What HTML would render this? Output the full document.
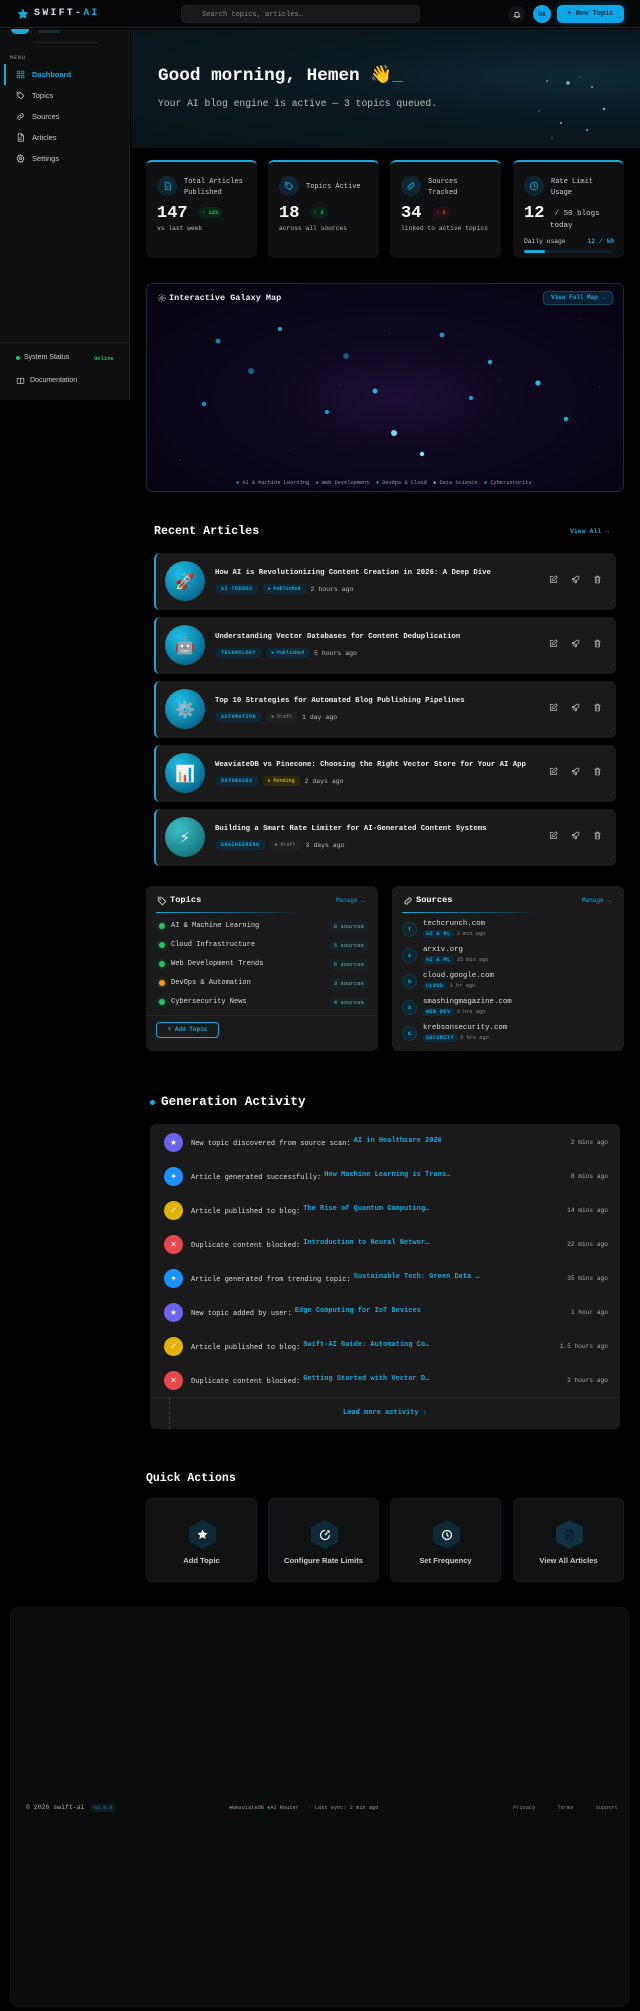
<!DOCTYPE html>
<html><head><meta charset="utf-8"><style>
*{box-sizing:border-box;margin:0;padding:0}
body{width:640px;height:2011px;background:#000;position:relative;overflow:hidden;font-family:"Liberation Mono",monospace;color:#e8e8e8}
.a{position:absolute}
.mono{font-family:"Liberation Mono",monospace}
.sans{font-family:"Liberation Sans",sans-serif}
.cy{color:#1ba8dc}
.card{background:#0e0f10;border-radius:6px;border:1px solid #16191b}
.nav{position:absolute;left:16px;font-family:"Liberation Sans",sans-serif;font-size:7.5px;color:#c8c8c8;display:flex;align-items:center;gap:7px}
.nav svg{width:9px;height:9px}
.stat{position:absolute;top:160px;width:111px;height:98px;background:#0e1011;border-radius:6px;border-top:2px solid #1ba8dc}
.stat .ic{position:absolute;left:11px;top:14px;width:20px;height:20px;border-radius:50%;background:#0f2530;display:flex;align-items:center;justify-content:center}
.stat .t{position:absolute;left:38px;top:15px;font-size:7px;line-height:10.5px;color:#cfcfcf}
.stat .n{position:absolute;left:11px;top:42px;font-size:17px;font-weight:bold;color:#fff}
.stat .s{position:absolute;left:11px;top:63px;font-size:6.3px;color:#bbb}
.pill{display:inline-block;font-size:5.5px;padding:2px 4px;border-radius:6px}
.art{position:absolute;left:154px;width:462px;height:57px;background:#1a1a1b;border-radius:6px;border-left:2px solid #1ba8dc}
.art .th{position:absolute;left:9px;top:8px;width:40px;height:40px;border-radius:50%;background:radial-gradient(circle at 35% 30%,#1ec0e6,#0a6f95 70%,#08506d);display:flex;align-items:center;justify-content:center;font-size:16px;font-family:"DejaVu Sans",sans-serif}
.art .tt{position:absolute;left:59px;top:16px;font-size:7.3px;font-weight:bold;color:#f0f0f0;white-space:nowrap}
.art .tg{position:absolute;left:60px;top:31px;display:flex;gap:5px;align-items:center;font-size:6.5px;color:#bbb}
.tag{font-size:5px;font-weight:bold;padding:2px 5px;border-radius:3px;background:#0f2a36;color:#1ba8dc;letter-spacing:.5px}
.art .ac{position:absolute;right:14px;top:22px;display:flex;gap:13px}
.art .ac svg{width:9px;height:9px}
.trow{position:absolute;left:13px;right:10px;height:14px;display:flex;align-items:center;font-size:7px;color:#ddd}
.trow .d{width:6px;height:6px;border-radius:50%;background:#22c55e;margin-right:6px;box-shadow:0 0 4px #22c55e88}
.trow .b{margin-left:auto;font-size:5.6px;background:#152224;padding:2px 4px;border-radius:3px;color:#8aa}
.srow{position:absolute;left:10px;height:22px}
.srow .av{position:absolute;left:0;top:2px;width:15px;height:15px;border-radius:50%;background:#0f2530;border:1px solid #173845;color:#1ba8dc;font-size:5.5px;font-weight:bold;display:flex;align-items:center;justify-content:center}
.srow .nm{position:absolute;left:21px;top:0;font-size:7.4px;color:#ddd;white-space:nowrap}
.srow .mt{position:absolute;left:21px;top:11px;font-size:5.3px;color:#888;white-space:nowrap}
.arow{position:absolute;left:14px;right:12px;height:20px}
.arow .i{position:absolute;left:0;top:0;width:19px;height:19px;border-radius:50%;display:flex;align-items:center;justify-content:center;color:#fff;font-size:8px;font-family:"DejaVu Sans",sans-serif}
.arow .x{position:absolute;left:27px;top:7px;font-size:7px;color:#ddd;white-space:nowrap}
.arow .x b{color:#1ba8dc;position:relative;top:-3px;margin-left:3px}
.arow .tm{position:absolute;right:0;top:6px;font-size:6.2px;color:#aaa}
.qa{position:absolute;top:1498px;width:111px;height:84px;background:#0f1112;border-radius:6px;border:1px solid #171a1c}
.qa .hx{position:absolute;left:42px;top:21px;width:27px;height:29px;background:#0d2a36;clip-path:polygon(50% 0,100% 25%,100% 75%,50% 100%,0 75%,0 25%);display:flex;align-items:center;justify-content:center}
.qa .l{position:absolute;left:0;right:0;top:57px;text-align:center;font-family:"Liberation Sans",sans-serif;font-weight:bold;font-size:7.6px;color:#ccc}
</style></head><body>

<!-- sidebar -->
<div class="a" style="left:0;top:29px;width:130px;height:371px;background:#0e1010;border-right:1px solid #1a1e20"></div>
<div class="a" style="left:11px;top:29px;width:18px;height:5px;border-radius:0 0 9px 9px;background:#1ba8dc"></div>
<div class="a" style="left:38px;top:30px;width:22px;height:3px;background:#1a2a30"></div>
<div class="a" style="left:33px;top:42px;width:65px;height:1px;background:#1c2224"></div>
<div class="a" style="left:10px;top:55px;font-size:5px;color:#999;letter-spacing:1px">MENU</div>
<div class="a" style="left:4px;top:64px;width:2px;height:21px;background:#1ba8dc"></div>
<div class="nav" style="top:70px;color:#1ba8dc;font-weight:bold"><svg viewBox="0 0 24 24" fill="none" stroke="#1ba8dc" stroke-width="2"><rect x="3" y="3" width="7" height="7" rx="1"/><rect x="14" y="3" width="7" height="7" rx="1"/><rect x="3" y="14" width="7" height="7" rx="1"/><rect x="14" y="14" width="7" height="7" rx="1"/></svg>Dashboard</div>
<div class="nav" style="top:91px"><svg viewBox="0 0 24 24" fill="none" stroke="#ccc" stroke-width="2"><path d="M3 3h8l10 10-8 8L3 11z"/><circle cx="7.5" cy="7.5" r="1"/></svg>Topics</div>
<div class="nav" style="top:112px"><svg viewBox="0 0 24 24" fill="none" stroke="#ccc" stroke-width="2"><path d="M10 14a4 4 0 005.6 0l3-3a4 4 0 00-5.6-5.6l-1 1M14 10a4 4 0 00-5.6 0l-3 3a4 4 0 005.6 5.6l1-1"/></svg>Sources</div>
<div class="nav" style="top:133px"><svg viewBox="0 0 24 24" fill="none" stroke="#ccc" stroke-width="2"><path d="M6 2h9l5 5v15H6zM14 2v6h6M9 13h6M9 17h6"/></svg>Articles</div>
<div class="nav" style="top:154px"><svg viewBox="0 0 24 24" fill="none" stroke="#ccc" stroke-width="2"><circle cx="12" cy="12" r="3"/><path d="M12 2l2 3 3.5-1 .5 3.5 3 2-2 3 2 3-3 2-.5 3.5-3.5-1-2 3-2-3-3.5 1L6 17l-3-2 2-3-2-3 3-2 .5-3.5L10 5z"/></svg>Settings</div>
<div class="a" style="left:0;top:342px;width:130px;height:1px;background:#1a2224"></div>
<div class="a" style="left:16px;top:356px;width:4px;height:4px;border-radius:50%;background:#22c55e"></div>
<div class="a sans" style="left:24px;top:354px;font-size:7px;color:#ccc">System Status</div>
<div class="a" style="left:94px;top:355px;font-size:5.5px;color:#22c55e;font-weight:bold">Online</div>
<svg class="a" style="left:16px;top:377px" width="9" height="8" viewBox="0 0 24 24" fill="none" stroke="#ccc" stroke-width="2"><path d="M2 4h7a3 3 0 013 3v14a2 2 0 00-2-2H2zM22 4h-7a3 3 0 00-3 3v14a2 2 0 012-2h8z"/></svg>
<div class="a sans" style="left:30px;top:377px;font-size:7px;color:#ccc">Documentation</div>

<!-- header -->
<div class="a" style="left:0;top:0;width:640px;height:28px;background:#050607;border-bottom:1px solid #0f2e3a"></div>
<svg class="a" style="left:17px;top:8px" width="12" height="12" viewBox="0 0 24 24"><path d="M12 1l3.3 7 7.7.9-5.7 5.3 1.5 7.6L12 18l-6.8 3.8 1.5-7.6L1 8.9 8.7 8z" fill="#1ba8dc"/></svg>
<div class="a" style="left:34px;top:8px;font-size:10px;font-weight:bold;letter-spacing:2.2px;color:#dde"><span>SWIFT-</span><span class="cy">AI</span></div>
<div class="a" style="left:181px;top:5px;width:239px;height:18px;background:#17191a;border-radius:5px;border:1px solid #222;font-size:7px;color:#888;padding:5px 0 0 20px">Search topics, articles…</div>
<div class="a" style="left:508px;top:6px;width:17px;height:17px;border-radius:50%;background:#0e1517;display:flex;align-items:center;justify-content:center"><svg width="8" height="9" viewBox="0 0 24 24" fill="none" stroke="#ddd" stroke-width="2.5"><path d="M6 17V11a6 6 0 0112 0v6l2 2H4zM10 21h4"/></svg></div>
<div class="a" style="left:533px;top:5px;width:18px;height:18px;border-radius:50%;background:#0ea5e9;font-size:6px;font-weight:bold;display:flex;align-items:center;justify-content:center;color:#053447">HA</div>
<div class="a" style="left:557px;top:5px;width:67px;height:18px;border-radius:5px;background:#0ea5e9;box-shadow:0 0 8px #0ea5e966;font-size:7px;font-weight:bold;color:#032d3f;display:flex;align-items:center;justify-content:center">+ New Topic</div>

<!-- hero -->
<div class="a" style="left:131px;top:29px;width:509px;height:119px;background:radial-gradient(ellipse at 90% 40%,#0d2a35 0%,#0a1a20 40%,#091317 100%)"></div>
<div class="a" style="left:158px;top:65px;font-size:17.7px;font-weight:bold;color:#fff;white-space:nowrap">Good morning, Hemen <span style="font-family:'DejaVu Sans',sans-serif;color:#f5b82e">👋</span><span class="cy">_</span></div>
<div class="a" style="left:158px;top:98px;font-size:9.7px;color:#b8bcbe;white-space:nowrap">Your AI blog engine is active — 3 topics queued.</div>
<svg class="a" style="left:530px;top:70px" width="80" height="80"><g fill="#3f8fa8"><circle cx="17" cy="11" r="1"/><circle cx="38" cy="13" r="1.8" fill="#8ab"/><circle cx="62" cy="17" r="1.2"/><circle cx="74" cy="39" r="1.2" fill="#9ab"/><circle cx="9" cy="41" r=".8"/><circle cx="31" cy="53" r="1" fill="#9ab"/><circle cx="57" cy="60" r="1.2"/><circle cx="22" cy="68" r=".7"/><circle cx="50" cy="7" r=".6"/></g></svg>

<!-- stats -->
<div class="stat" style="left:146px"><div class="ic"><svg width="9" height="10" viewBox="0 0 24 24" fill="none" stroke="#1ba8dc" stroke-width="2"><path d="M6 2h9l5 5v15H6zM9 14l2 2 4-4"/></svg></div><div class="t">Total Articles<br>Published</div><div class="n">147 <span class="pill" style="background:#0c2418;color:#22c55e;vertical-align:middle">↑ 12%</span></div><div class="s">vs last week</div></div>
<div class="stat" style="left:268px"><div class="ic"><svg width="10" height="10" viewBox="0 0 24 24" fill="none" stroke="#1ba8dc" stroke-width="2"><path d="M3 3h8l10 10-8 8L3 11z"/><circle cx="7.5" cy="7.5" r="1"/></svg></div><div class="t" style="top:20px">Topics Active</div><div class="n">18 <span class="pill" style="background:#0c2418;color:#22c55e;vertical-align:middle">↑ 3</span></div><div class="s">across all sources</div></div>
<div class="stat" style="left:390px"><div class="ic"><svg width="10" height="10" viewBox="0 0 24 24" fill="none" stroke="#1ba8dc" stroke-width="2"><path d="M10 14a4 4 0 005.6 0l3-3a4 4 0 00-5.6-5.6l-1 1M14 10a4 4 0 00-5.6 0l-3 3a4 4 0 005.6 5.6l1-1"/></svg></div><div class="t">Sources<br>Tracked</div><div class="n">34 <span class="pill" style="background:#2a0f12;color:#e5484d;vertical-align:middle">↓ 2</span></div><div class="s">linked to active topics</div></div>
<div class="stat" style="left:513px"><div class="ic"><svg width="10" height="10" viewBox="0 0 24 24" fill="none" stroke="#1ba8dc" stroke-width="2"><circle cx="12" cy="12" r="9"/><path d="M12 7v5l3 2"/></svg></div><div class="t">Rate Limit<br>Usage</div><div class="n">12 <span style="font-size:7.5px;font-weight:normal;color:#ccc;position:relative;top:-2px">/ 50 blogs</span></div><div class="a" style="left:37px;top:60px;font-size:7.5px;color:#ccc">today</div><div class="a" style="left:11px;top:76px;font-size:6.3px;color:#ccc">Daily usage</div><div class="a cy" style="right:10px;top:76px;font-size:6.3px;font-weight:bold">12 / 50</div><div class="a" style="left:11px;top:88px;width:88px;height:3px;border-radius:2px;background:#14202a"><div style="width:21px;height:3px;border-radius:2px;background:#1ba8dc"></div></div></div>

<!-- galaxy -->
<div class="a" style="left:146px;top:283px;width:478px;height:209px;border-radius:7px;border:1px solid #12303c;background:radial-gradient(ellipse at 52% 55%,#1d0f33 0%,#0e0820 35%,#070512 80%)"></div>
<svg class="a" style="left:157px;top:293px" width="10" height="10" viewBox="0 0 24 24" fill="none" stroke="#bbb" stroke-width="2"><circle cx="12" cy="12" r="3"/><circle cx="12" cy="12" r="8" stroke-dasharray="3 3"/></svg>
<div class="a" style="left:169px;top:293px;font-size:8.5px;font-weight:bold;color:#eee">Interactive Galaxy Map</div>
<div class="a" style="left:543px;top:291px;width:70px;height:14px;border-radius:4px;border:1px solid #124660;background:#0a2030;font-size:6px;font-weight:bold;color:#1ba8dc;text-align:center;line-height:12px">View Full Map →</div>
<svg class="a" style="left:0;top:0" width="640" height="520"><g fill="#1ba8dc">
<circle cx="218" cy="341" r="2.5" fill="#137fae"/><circle cx="280" cy="329" r="2"/><circle cx="251" cy="371" r="3" fill="#125f88"/><circle cx="346" cy="356" r="2.8" fill="#1a5f86"/><circle cx="204" cy="404" r="2.2" fill="#1590c4"/><circle cx="327" cy="412" r="2"/><circle cx="375" cy="391" r="2.5" fill="#25b2e8"/><circle cx="394" cy="433" r="3" fill="#7ad8f4"/><circle cx="422" cy="454" r="2.2" fill="#8ee0f6"/><circle cx="442" cy="335" r="2.4" fill="#1795cc"/><circle cx="490" cy="362" r="2.2"/><circle cx="471" cy="398" r="2"/><circle cx="538" cy="383" r="2.6" fill="#2ab8ec"/><circle cx="566" cy="419" r="2.3"/>
</g><g fill="#555"><circle cx="390" cy="333" r=".5"/><circle cx="340" cy="385" r=".5"/><circle cx="290" cy="450" r=".5"/><circle cx="580" cy="319" r=".5"/><circle cx="500" cy="380" r=".5"/><circle cx="180" cy="460" r=".5"/><circle cx="600" cy="387" r=".5"/></g></svg>
<div class="a" style="left:236px;top:480px;font-size:5.3px;color:#999;white-space:nowrap"><span class="cy">●</span> AI &amp; Machine Learning &nbsp;<span class="cy">●</span> Web Development &nbsp;<span class="cy">●</span> DevOps &amp; Cloud &nbsp;<span style="color:#7ad8f4">●</span> Data Science &nbsp;<span class="cy">●</span> Cybersecurity</div>

<!-- recent articles -->
<div class="a" style="left:154px;top:524px;font-size:11.7px;font-weight:bold;color:#fff">Recent Articles</div>
<div class="a cy" style="left:570px;top:528px;font-size:6.5px;font-weight:bold">View All →</div>

<div class="art" style="top:553px"><div class="th">🚀</div><div class="tt">How AI is Revolutionizing Content Creation in 2026: A Deep Dive</div><div class="tg"><span class="tag">AI TRENDS</span><span class="tag" style="letter-spacing:0">● Published</span><span>2 hours ago</span></div><div class="ac">
<svg viewBox="0 0 24 24" fill="none" stroke="#bbb" stroke-width="2"><path d="M11 4H4v16h16v-7M18 2l4 4-10 10H8v-4z"/></svg><svg viewBox="0 0 24 24" fill="none" stroke="#bbb" stroke-width="2"><path d="M5 19l4-4M14 4c4-2 6 0 6 0s2 2 0 6l-7 7-6-6zM9 9H5l-2 3h5M15 15v4l-3 2v-5"/></svg><svg viewBox="0 0 24 24" fill="none" stroke="#bbb" stroke-width="2"><path d="M4 6h16M9 6V3h6v3M6 6l1 15h10l1-15M10 10v7M14 10v7"/></svg></div></div>
<div class="art" style="top:617px"><div class="th">🤖</div><div class="tt">Understanding Vector Databases for Content Deduplication</div><div class="tg"><span class="tag">TECHNOLOGY</span><span class="tag" style="letter-spacing:0">● Published</span><span>5 hours ago</span></div><div class="ac">
<svg viewBox="0 0 24 24" fill="none" stroke="#bbb" stroke-width="2"><path d="M11 4H4v16h16v-7M18 2l4 4-10 10H8v-4z"/></svg><svg viewBox="0 0 24 24" fill="none" stroke="#bbb" stroke-width="2"><path d="M5 19l4-4M14 4c4-2 6 0 6 0s2 2 0 6l-7 7-6-6zM9 9H5l-2 3h5M15 15v4l-3 2v-5"/></svg><svg viewBox="0 0 24 24" fill="none" stroke="#bbb" stroke-width="2"><path d="M4 6h16M9 6V3h6v3M6 6l1 15h10l1-15M10 10v7M14 10v7"/></svg></div></div>
<div class="art" style="top:681px"><div class="th">⚙️</div><div class="tt">Top 10 Strategies for Automated Blog Publishing Pipelines</div><div class="tg"><span class="tag">AUTOMATION</span><span class="tag" style="letter-spacing:0;background:#1f2021;color:#888;font-weight:normal">● Draft</span><span>1 day ago</span></div><div class="ac">
<svg viewBox="0 0 24 24" fill="none" stroke="#bbb" stroke-width="2"><path d="M11 4H4v16h16v-7M18 2l4 4-10 10H8v-4z"/></svg><svg viewBox="0 0 24 24" fill="none" stroke="#bbb" stroke-width="2"><path d="M5 19l4-4M14 4c4-2 6 0 6 0s2 2 0 6l-7 7-6-6zM9 9H5l-2 3h5M15 15v4l-3 2v-5"/></svg><svg viewBox="0 0 24 24" fill="none" stroke="#bbb" stroke-width="2"><path d="M4 6h16M9 6V3h6v3M6 6l1 15h10l1-15M10 10v7M14 10v7"/></svg></div></div>
<div class="art" style="top:745px"><div class="th">📊</div><div class="tt">WeaviateDB vs Pinecone: Choosing the Right Vector Store for Your AI App</div><div class="tg"><span class="tag">DATABASES</span><span class="tag" style="letter-spacing:0;background:#2e2a0c;color:#c9a418">● Pending</span><span>2 days ago</span></div><div class="ac">
<svg viewBox="0 0 24 24" fill="none" stroke="#bbb" stroke-width="2"><path d="M11 4H4v16h16v-7M18 2l4 4-10 10H8v-4z"/></svg><svg viewBox="0 0 24 24" fill="none" stroke="#bbb" stroke-width="2"><path d="M5 19l4-4M14 4c4-2 6 0 6 0s2 2 0 6l-7 7-6-6zM9 9H5l-2 3h5M15 15v4l-3 2v-5"/></svg><svg viewBox="0 0 24 24" fill="none" stroke="#bbb" stroke-width="2"><path d="M4 6h16M9 6V3h6v3M6 6l1 15h10l1-15M10 10v7M14 10v7"/></svg></div></div>
<div class="art" style="top:809px"><div class="th" style="background:radial-gradient(circle at 35% 30%,#3cc0c8,#1a7c84 70%,#125a60)">⚡</div><div class="tt">Building a Smart Rate Limiter for AI-Generated Content Systems</div><div class="tg"><span class="tag">ENGINEERING</span><span class="tag" style="letter-spacing:0;background:#1f2021;color:#888;font-weight:normal">● Draft</span><span>3 days ago</span></div><div class="ac">
<svg viewBox="0 0 24 24" fill="none" stroke="#bbb" stroke-width="2"><path d="M11 4H4v16h16v-7M18 2l4 4-10 10H8v-4z"/></svg><svg viewBox="0 0 24 24" fill="none" stroke="#bbb" stroke-width="2"><path d="M5 19l4-4M14 4c4-2 6 0 6 0s2 2 0 6l-7 7-6-6zM9 9H5l-2 3h5M15 15v4l-3 2v-5"/></svg><svg viewBox="0 0 24 24" fill="none" stroke="#bbb" stroke-width="2"><path d="M4 6h16M9 6V3h6v3M6 6l1 15h10l1-15M10 10v7M14 10v7"/></svg></div></div>

<!-- topics -->
<div class="a" style="left:146px;top:886px;width:232px;height:165px;background:#1a1a1b;border-radius:6px">
<svg class="a" style="left:11px;top:10px" width="10" height="10" viewBox="0 0 24 24" fill="none" stroke="#ddd" stroke-width="2"><path d="M3 3h8l10 10-8 8L3 11z"/><circle cx="7.5" cy="7.5" r="1"/></svg>
<div class="a" style="left:24px;top:9px;font-size:8.7px;font-weight:bold;color:#fff">Topics</div>
<div class="a cy" style="left:190px;top:11px;font-size:6px">Manage →</div>
<div class="a" style="left:10px;top:26px;width:148px;height:1px;background:linear-gradient(90deg,#1ba8dc,#1ba8dc55 70%,transparent)"></div>
<div class="trow" style="top:33px"><span class="d"></span>AI &amp; Machine Learning<span class="b">8 sources</span></div>
<div class="trow" style="top:52px"><span class="d"></span>Cloud Infrastructure<span class="b">5 sources</span></div>
<div class="trow" style="top:71px"><span class="d"></span>Web Development Trends<span class="b">6 sources</span></div>
<div class="trow" style="top:90px"><span class="d" style="background:#f59e0b;box-shadow:0 0 4px #f59e0b88"></span>DevOps &amp; Automation<span class="b">3 sources</span></div>
<div class="trow" style="top:109px"><span class="d"></span>Cybersecurity News<span class="b">4 sources</span></div>
<div class="a" style="left:0;top:129px;width:232px;height:1px;background:#262828"></div>
<div class="a" style="left:10px;top:136px;width:63px;height:16px;border:1px solid #1ba8dc;border-radius:4px;font-size:6px;font-weight:bold;color:#1ba8dc;text-align:center;line-height:14px">+ Add Topic</div>
</div>
<!-- sources -->
<div class="a" style="left:392px;top:886px;width:232px;height:165px;background:#1a1a1b;border-radius:6px">
<svg class="a" style="left:11px;top:10px" width="10" height="10" viewBox="0 0 24 24" fill="none" stroke="#ddd" stroke-width="2"><path d="M10 14a4 4 0 005.6 0l3-3a4 4 0 00-5.6-5.6l-1 1M14 10a4 4 0 00-5.6 0l-3 3a4 4 0 005.6 5.6l1-1"/></svg>
<div class="a" style="left:24px;top:9px;font-size:8.7px;font-weight:bold;color:#fff">Sources</div>
<div class="a cy" style="left:190px;top:11px;font-size:6px">Manage →</div>
<div class="a" style="left:10px;top:26px;width:141px;height:1px;background:linear-gradient(90deg,#1ba8dc,#1ba8dc55 70%,transparent)"></div>
<div class="srow" style="top:34px"><div class="av">T</div><div class="nm">techcrunch.com</div><div class="mt"><span class="tag" style="padding:1px 3px">AI &amp; ML</span> 2 min ago</div></div>
<div class="srow" style="top:60px"><div class="av">A</div><div class="nm">arxiv.org</div><div class="mt"><span class="tag" style="padding:1px 3px">AI &amp; ML</span> 15 min ago</div></div>
<div class="srow" style="top:86px"><div class="av">G</div><div class="nm">cloud.google.com</div><div class="mt"><span class="tag" style="padding:1px 3px">CLOUD</span> 1 hr ago</div></div>
<div class="srow" style="top:112px"><div class="av">S</div><div class="nm">smashingmagazine.com</div><div class="mt"><span class="tag" style="padding:1px 3px">WEB DEV</span> 3 hrs ago</div></div>
<div class="srow" style="top:138px"><div class="av">K</div><div class="nm">krebsonsecurity.com</div><div class="mt"><span class="tag" style="padding:1px 3px">SECURITY</span> 5 hrs ago</div></div>
</div>

<!-- generation activity -->
<div class="a" style="left:150px;top:1100px;width:5px;height:5px;border-radius:50%;background:#1ba8dc"></div>
<div class="a" style="left:161px;top:1094px;font-size:12.7px;font-weight:bold;color:#fff">Generation Activity</div>
<div class="a" style="left:150px;top:1124px;width:470px;height:305px;background:#1a1a1b;border-radius:6px">
<div class="arow" style="top:9px"><div class="i" style="background:#6b63e8">★</div><div class="x">New topic discovered from source scan:<b>AI in Healthcare 2026</b></div><div class="tm">2 mins ago</div></div>
<div class="arow" style="top:43px"><div class="i" style="background:#1e8fff">✦</div><div class="x">Article generated successfully:<b>How Machine Learning is Trans…</b></div><div class="tm">8 mins ago</div></div>
<div class="arow" style="top:77px"><div class="i" style="background:#e0b40c">✓</div><div class="x">Article published to blog:<b>The Rise of Quantum Computing…</b></div><div class="tm">14 mins ago</div></div>
<div class="arow" style="top:111px"><div class="i" style="background:#e5484d">✕</div><div class="x">Duplicate content blocked:<b>Introduction to Neural Networ…</b></div><div class="tm">22 mins ago</div></div>
<div class="arow" style="top:145px"><div class="i" style="background:#1e8fff">✦</div><div class="x">Article generated from trending topic:<b>Sustainable Tech: Green Data …</b></div><div class="tm">35 mins ago</div></div>
<div class="arow" style="top:179px"><div class="i" style="background:#6b63e8">★</div><div class="x">New topic added by user:<b>Edge Computing for IoT Devices</b></div><div class="tm">1 hour ago</div></div>
<div class="arow" style="top:213px"><div class="i" style="background:#e0b40c">✓</div><div class="x">Article published to blog:<b>Swift-AI Guide: Automating Co…</b></div><div class="tm">1.5 hours ago</div></div>
<div class="arow" style="top:247px"><div class="i" style="background:#e5484d">✕</div><div class="x">Duplicate content blocked:<b>Getting Started with Vector D…</b></div><div class="tm">2 hours ago</div></div>
<div class="a" style="left:0;top:273px;width:470px;height:1px;background:#1d2a2e"></div>
<div class="a" style="left:19px;top:273px;width:0;height:32px;border-left:1px dashed #1a5068"></div>
<div class="a cy" style="left:0;right:0;top:285px;text-align:center;font-size:7px;font-weight:bold">Load more activity ↓</div>
</div>

<!-- quick actions -->
<div class="a" style="left:146px;top:1472px;font-size:11.5px;font-weight:bold;color:#fff">Quick Actions</div>
<div class="qa" style="left:146px"><div class="hx"><svg width="11" height="11" viewBox="0 0 24 24"><path d="M12 1l3.3 7 7.7.9-5.7 5.3 1.5 7.6L12 18l-6.8 3.8 1.5-7.6L1 8.9 8.7 8z" fill="#fff"/></svg></div><div class="l">Add Topic</div></div>
<div class="qa" style="left:268px"><div class="hx"><svg width="12" height="12" viewBox="0 0 24 24" fill="none" stroke="#fff" stroke-width="2.5"><path d="M21 12a9 9 0 11-9-9M12 12l5-5M16 4h4v4"/></svg></div><div class="l">Configure Rate Limits</div></div>
<div class="qa" style="left:390px"><div class="hx"><svg width="12" height="12" viewBox="0 0 24 24" fill="none" stroke="#fff" stroke-width="2.5"><circle cx="12" cy="12" r="9"/><path d="M12 7v5l3 3"/></svg></div><div class="l">Set Frequency</div></div>
<div class="qa" style="left:513px"><div class="hx" style="background:#0f3242"><svg width="11" height="12" viewBox="0 0 24 24" fill="none" stroke="#0a1a22" stroke-width="2.5"><path d="M6 2h9l5 5v15H6zM14 2v6h6M9 13h6M9 17h6"/></svg></div><div class="l">View All Articles</div></div>

<!-- footer -->
<div class="a" style="left:10px;top:1607px;width:619px;height:400px;background:#0b0c0c;border-radius:8px;border:1px solid #121414"></div>
<div class="a" style="left:26px;top:1804px;font-size:6.5px;color:#aaa;white-space:nowrap">© 2026 swift-ai <span style="font-size:5px;color:#2a7a88;background:#0d1e22;padding:1px 3px;border-radius:2px;margin-left:3px">v1.0.0</span></div>
<div class="a" style="left:229px;top:1805px;font-size:5.3px;color:#999;white-space:nowrap"><span style="color:#22c55e">●</span>WeaviateDB <span style="color:#22c55e">●</span>AI Router &nbsp;&nbsp;· Last sync: 2 min ago</div>
<div class="a" style="left:513px;top:1805px;font-size:5.3px;color:#888;white-space:nowrap">Privacy&nbsp;&nbsp;&nbsp;&nbsp;&nbsp;&nbsp;&nbsp;Terms&nbsp;&nbsp;&nbsp;&nbsp;&nbsp;&nbsp;&nbsp;Support</div>
</body></html>
